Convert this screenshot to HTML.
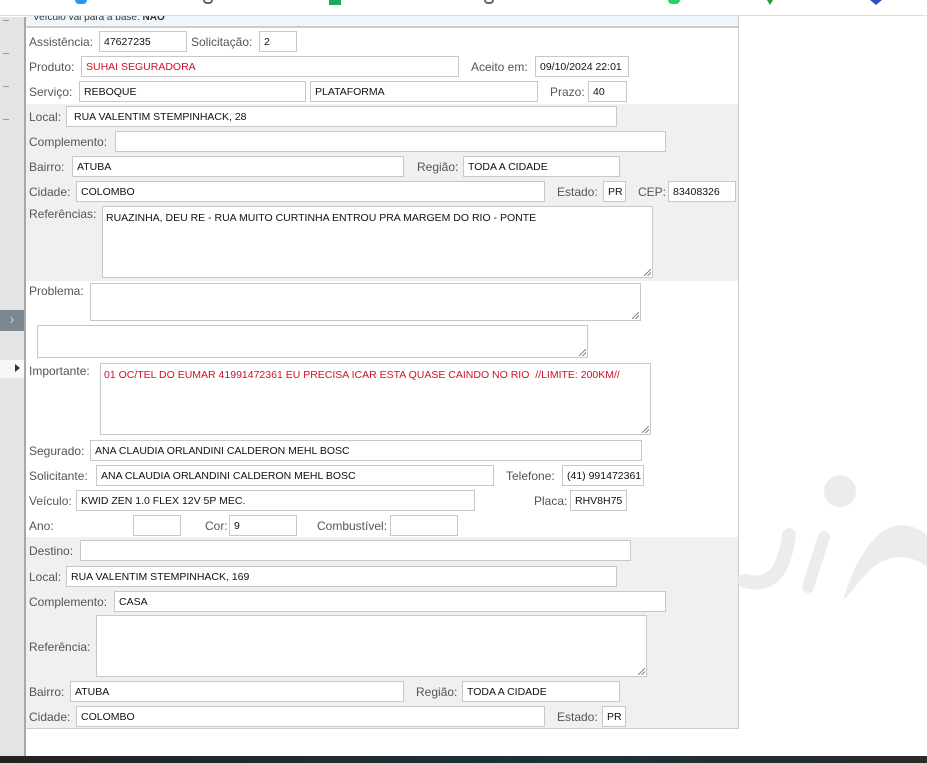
<!DOCTYPE html>
<html><head><meta charset="utf-8"><style>
*{margin:0;padding:0;box-sizing:border-box}
body{width:927px;height:763px;overflow:hidden;background:#fff;position:relative;font-family:"Liberation Sans",sans-serif;}
.a{position:absolute}
.l{position:absolute;font-size:12px;color:#555;line-height:14px;white-space:nowrap}
.i{position:absolute;height:21px;border:1px solid #c8c8c8;background:#fff;font-size:10.5px;color:#111;padding:4px 0 0 4px;white-space:nowrap;overflow:hidden;line-height:12px}
.t{position:absolute;border:1px solid #c8c8c8;background:#fff;font-size:10.5px;color:#111;padding:5px 0 0 3px;line-height:13px}
.t:after{content:"";position:absolute;right:1px;bottom:1px;width:7px;height:7px;background:linear-gradient(135deg,transparent 45%,#888 46%,#888 54%,transparent 55%,transparent 70%,#888 71%,#888 79%,transparent 80%)}
.r{color:#d0102a}
.tk{position:absolute;left:3px;width:6px;height:1px;background:#999}
</style></head><body>
<!-- top bar -->
<div class="a" style="left:0;top:0;width:927px;height:16px;background:#fff;border-bottom:1px solid #ddd"></div>
<div class="a" style="left:75px;top:0;width:12px;height:4px;background:#1d9bf0;border-radius:0 0 6px 6px"></div>
<div class="a" style="left:203px;top:0;width:10px;height:4px;border:2px solid #666;border-top:none;border-radius:0 0 6px 6px"></div>
<div class="a" style="left:329px;top:0;width:12px;height:5px;background:#21a366"></div>
<div class="a" style="left:484px;top:0;width:10px;height:4px;border:2px solid #666;border-top:none;border-radius:0 0 6px 6px"></div>
<div class="a" style="left:668px;top:0;width:12px;height:4px;background:#25d366;border-radius:0 0 6px 6px"></div>
<div class="a" style="left:767px;top:0;width:6px;height:5px;background:#2a9a3a;clip-path:polygon(0 0,100% 0,50% 100%)"></div>
<div class="a" style="left:870px;top:0;width:12px;height:5px;background:#2f4fc2;clip-path:polygon(0 0,100% 0,50% 100%)"></div>
<!-- sidebar -->
<div class="a" style="left:0;top:17px;width:26px;height:740px;background:#e4e4e4;border-right:2px solid #a8a8a8"></div>
<div class="tk" style="top:20px"></div><div class="tk" style="top:53px"></div><div class="tk" style="top:86px"></div><div class="tk" style="top:119px"></div>
<div class="a" style="left:0;top:360px;width:24px;height:18px;background:#f8f8f8"></div>
<div class="a" style="left:15px;top:364px;width:0;height:0;border-left:5px solid #333;border-top:4px solid transparent;border-bottom:4px solid transparent"></div>
<div class="a" style="left:0;top:310px;width:24px;height:21px;background:#7d8790;color:#ccd;font-size:15px;line-height:20px;text-align:center">›</div>
<!-- main panel -->
<div class="a" style="left:26px;top:16px;width:713px;height:713px;border-right:1px solid #ccc;border-bottom:1px solid #ccc"></div>
<div class="a" style="left:26px;top:16px;width:712px;height:12px;background:#eef6fc;border-bottom:2px solid #ccc;font-size:10px;line-height:4px;color:#333;padding-left:7px;overflow:hidden">Veículo vai para a base: <b>NÃO</b></div>
<div class="a" style="left:26px;top:104px;width:712px;height:177px;background:#f0f0f0"></div>
<div class="a" style="left:26px;top:537px;width:712px;height:191px;background:#f0f0f0"></div>
<!-- watermark -->
<svg class="a" style="left:735px;top:465px" width="192" height="160" viewBox="0 0 192 160">
<g fill="#ececec" stroke="#ececec" stroke-linecap="round">
<circle cx="105" cy="26" r="16" stroke="none"/>
<path d="M54 70 C50 100 40 124 10 116" fill="none" stroke-width="14"/>
<path d="M89 72 L73 122" fill="none" stroke-width="12"/>
<path d="M108 135 C120 95 140 62 165 60 C178 60 188 66 192 70 L192 102 C175 88 150 88 132 108 C122 118 115 130 108 135 Z" stroke="none"/>
</g></svg>
<!-- dark bottom -->
<div class="a" style="left:0;top:756px;width:927px;height:7px;background:linear-gradient(90deg,#222,#1a3338 60%,#2a2a2a)"></div>

<div class="l" style="left:29px;top:35px">Assistência:</div><div class="i" style="left:99px;top:31px;width:88px">47627235</div>
<div class="l" style="left:191px;top:35px">Solicitação:</div><div class="i" style="left:259px;top:31px;width:38px">2</div>
<div class="l" style="left:29px;top:60px">Produto:</div><div class="i r" style="left:81px;top:56px;width:378px">SUHAI SEGURADORA</div>
<div class="l" style="left:471px;top:60px">Aceito em:</div><div class="i" style="left:535px;top:56px;width:94px">09/10/2024 22:01</div>
<div class="l" style="left:29px;top:85px">Serviço:</div><div class="i" style="left:79px;top:81px;width:227px">REBOQUE</div>
<div class="i" style="left:310px;top:81px;width:228px">PLATAFORMA</div>
<div class="l" style="left:550px;top:85px">Prazo:</div><div class="i" style="left:588px;top:81px;width:39px">40</div>

<div class="l" style="left:29px;top:110px">Local:</div><div class="i" style="left:66px;top:106px;width:551px;padding-left:7px">RUA VALENTIM STEMPINHACK, 28</div>
<div class="l" style="left:29px;top:135px">Complemento:</div><div class="i" style="left:115px;top:131px;width:551px"></div>
<div class="l" style="left:29px;top:160px">Bairro:</div><div class="i" style="left:72px;top:156px;width:332px">ATUBA</div>
<div class="l" style="left:417px;top:160px">Região:</div><div class="i" style="left:463px;top:156px;width:157px">TODA A CIDADE</div>
<div class="l" style="left:29px;top:185px">Cidade:</div><div class="i" style="left:76px;top:181px;width:469px">COLOMBO</div>
<div class="l" style="left:557px;top:185px">Estado:</div><div class="i" style="left:603px;top:181px;width:23px">PR</div>
<div class="l" style="left:638px;top:185px">CEP:</div><div class="i" style="left:668px;top:181px;width:68px">83408326</div>
<div class="l" style="left:29px;top:207px">Referências:</div><div class="t" style="left:102px;top:206px;width:551px;height:72px">RUAZINHA, DEU RE - RUA MUITO CURTINHA ENTROU PRA MARGEM DO RIO - PONTE</div>

<div class="l" style="left:29px;top:284px">Problema:</div><div class="t" style="left:90px;top:283px;width:551px;height:38px"></div>
<div class="t" style="left:37px;top:325px;width:551px;height:33px"></div>
<div class="l" style="left:29px;top:364px">Importante:</div><div class="t r" style="left:100px;top:363px;width:551px;height:72px">01 OC/TEL DO EUMAR 41991472361 EU PRECISA ICAR ESTA QUASE CAINDO NO RIO &nbsp;//LIMITE: 200KM//</div>

<div class="l" style="left:29px;top:444px">Segurado:</div><div class="i" style="left:90px;top:440px;width:552px">ANA CLAUDIA ORLANDINI CALDERON MEHL BOSC</div>
<div class="l" style="left:29px;top:469px">Solicitante:</div><div class="i" style="left:96px;top:465px;width:398px">ANA CLAUDIA ORLANDINI CALDERON MEHL BOSC</div>
<div class="l" style="left:506px;top:469px">Telefone:</div><div class="i" style="left:562px;top:465px;width:82px">(41) 991472361</div>
<div class="l" style="left:29px;top:494px">Veículo:</div><div class="i" style="left:76px;top:490px;width:399px">KWID ZEN 1.0 FLEX 12V 5P MEC.</div>
<div class="l" style="left:534px;top:494px">Placa:</div><div class="i" style="left:570px;top:490px;width:57px">RHV8H75</div>
<div class="l" style="left:29px;top:519px">Ano:</div><div class="i" style="left:133px;top:515px;width:48px"></div>
<div class="l" style="left:205px;top:519px">Cor:</div><div class="i" style="left:229px;top:515px;width:68px">9</div>
<div class="l" style="left:317px;top:519px">Combustível:</div><div class="i" style="left:390px;top:515px;width:68px"></div>

<div class="l" style="left:29px;top:544px">Destino:</div><div class="i" style="left:80px;top:540px;width:551px"></div>
<div class="l" style="left:29px;top:570px">Local:</div><div class="i" style="left:66px;top:566px;width:551px">RUA VALENTIM STEMPINHACK, 169</div>
<div class="l" style="left:29px;top:595px">Complemento:</div><div class="i" style="left:114px;top:591px;width:552px">CASA</div>
<div class="l" style="left:29px;top:640px">Referência:</div><div class="t" style="left:96px;top:615px;width:551px;height:62px"></div>
<div class="l" style="left:29px;top:685px">Bairro:</div><div class="i" style="left:70px;top:681px;width:334px">ATUBA</div>
<div class="l" style="left:416px;top:685px">Região:</div><div class="i" style="left:462px;top:681px;width:158px">TODA A CIDADE</div>
<div class="l" style="left:29px;top:710px">Cidade:</div><div class="i" style="left:76px;top:706px;width:469px">COLOMBO</div>
<div class="l" style="left:557px;top:710px">Estado:</div><div class="i" style="left:602px;top:706px;width:24px">PR</div>
</body></html>
